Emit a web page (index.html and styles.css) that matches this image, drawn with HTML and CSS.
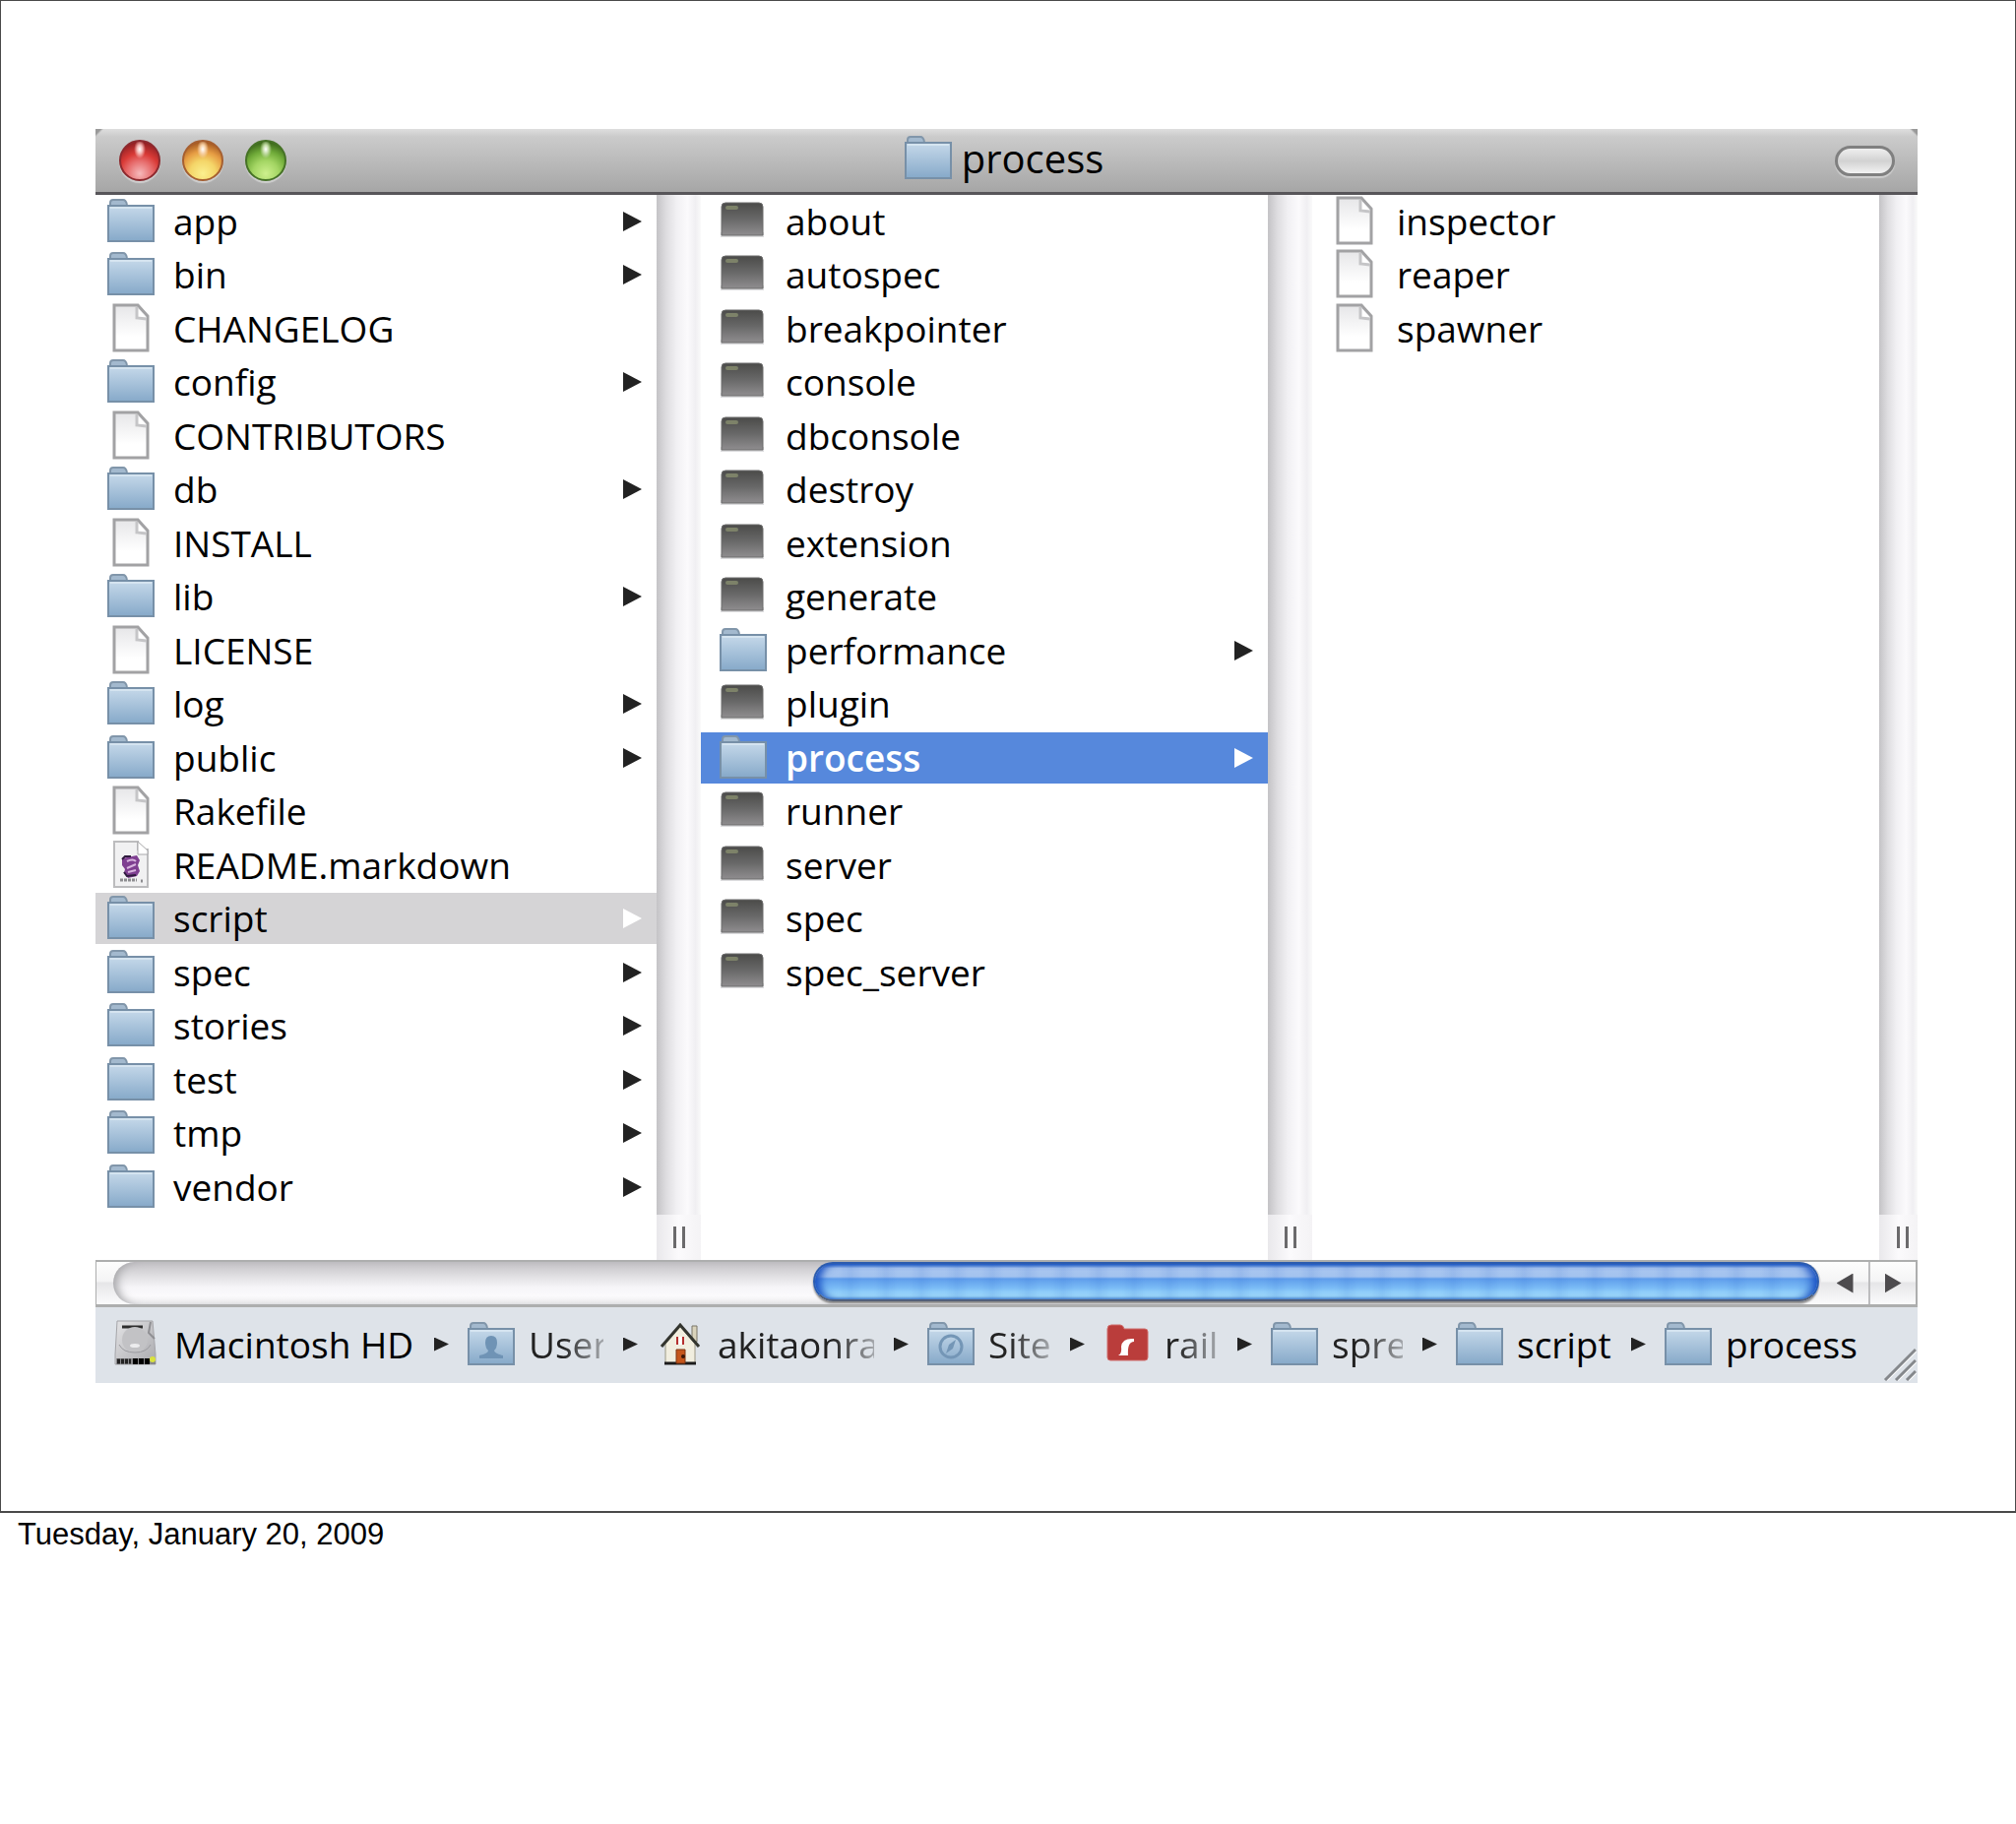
FILE: index.html
```html
<!DOCTYPE html>
<html lang="en">
<head>
    <meta charset="UTF-8">
    <meta name="viewport" content="width=device-width, initial-scale=1.0">
    <title>process</title>
    <link rel="stylesheet" href="styles.css">
</head>
<body>
    <!-- Shared icons -->
    <svg class="defs" aria-hidden="true">
        <defs>
            <linearGradient id="folderFill" x1="0" y1="0" x2="0" y2="1">
                <stop offset="0" stop-color="#c6d9ea"/>
                <stop offset="1" stop-color="#86a9c9"/>
            </linearGradient>
            <linearGradient id="fileFill" x1="0" y1="0" x2="0" y2="1">
                <stop offset="0" stop-color="#e6e6e8"/>
                <stop offset="0.7" stop-color="#ffffff"/>
            </linearGradient>
            <linearGradient id="execFill" x1="0" y1="0" x2="0" y2="1">
                <stop offset="0" stop-color="#4b4b49"/>
                <stop offset="0.5" stop-color="#686868"/>
                <stop offset="1" stop-color="#8f8d8f"/>
            </linearGradient>
            <linearGradient id="diskFill" x1="0" y1="0" x2="1" y2="1">
                <stop offset="0" stop-color="#e4e4e6"/>
                <stop offset="1" stop-color="#a9a9ad"/>
            </linearGradient>
        </defs>
        <symbol id="folder" viewBox="0 0 48 52">
            <path d="M3 12V7q0-3 3-3h10q3 0 4 5l1 3z" fill="#a3b9ce" stroke="#8196aa" stroke-width="2"/>
            <path d="M1 10h46v36H1z" fill="url(#folderFill)" stroke="#7790a8" stroke-width="2"/>
            <path d="M3 12h42" stroke="#d5e4f0" stroke-width="2"/>
        </symbol>
        <symbol id="file" viewBox="0 0 48 52">
            <path d="M7 2h24l10 11v35H7z" fill="url(#fileFill)" stroke="#a2a2a4" stroke-width="3"/>
            <path d="M30 4l10 11q-6 3-11 1z" fill="#fff"/>
            <path d="M30 4v11l10 1" fill="none" stroke="#c5c5c7" stroke-width="3"/>
        </symbol>
        <symbol id="markdown" viewBox="0 0 48 52">
            <path d="M7 2h24v8h10v38H7z" fill="#f1f1f2" stroke="#bcbcbe" stroke-width="2"/>
            <path d="M31 2l10 9v4H31z" fill="#fff" stroke="#a8a8aa"/>
            <path d="M15 19l15-3 3 5-2 5 2 6-3 5-9 2-4-5 1-4-3-4z" fill="#7f3f91"/>
            <path d="M20 22q6-3 9 0M20 29l9-4M21 33l8-2" fill="none" stroke="#d8b5df" stroke-width="2"/>
            <path d="M15 20l3-3 6 0M17 33l3 4 9-1" fill="none" stroke="#2e1a3d" stroke-width="2"/>
            <path d="M13 41h17M34 42h2" stroke="#8d8d90" stroke-width="3" stroke-dasharray="3 1"/>
        </symbol>
        <symbol id="exec" viewBox="0 0 48 52">
            <rect x="1" y="37" width="44" height="5" fill="#dcdcde"/>
            <path d="M2 40V11q0-4 4-4h34q4 0 4 4v29z" fill="url(#execFill)" stroke="#6c6c6c"/>
            <rect x="6" y="10" width="13" height="4" rx="2" fill="#7d8269"/>
        </symbol>
        <symbol id="disk" viewBox="0 0 48 52">
            <path d="M4 2h36l3 34v10H2V36z" fill="url(#diskFill)" stroke="#a5a5a9"/>
            <path d="M9 8h21" stroke="#2d2d2d" stroke-width="3"/>
            <path d="M38 3l-2 11 6 6" fill="none" stroke="#8f8f93" stroke-width="2"/>
            <circle cx="22" cy="21" r="13" fill="#c2c2c5"/>
            <ellipse cx="22" cy="27" rx="5" ry="2" fill="#ececee"/>
            <path d="M6 26q4 8 16 8t16-8" fill="none" stroke="#9b9ba0"/>
            <path d="M3 40h40v6H3z" fill="#88888b"/>
            <path d="M4 43h14" stroke="#222" stroke-width="5" stroke-dasharray="3 1"/>
            <path d="M20 43h17" stroke="#000" stroke-width="6" stroke-dasharray="5 1"/>
            <circle cx="40" cy="41" r="3" fill="#d9e23c"/>
        </symbol>
        <symbol id="home" viewBox="0 0 48 52">
            <path d="M36 7h5v16h-5z" fill="#d9d3bb" stroke="#7b7768"/>
            <path d="M9 25L24 8l15 17v20H9z" fill="#f1eedf" stroke="#9c9884"/>
            <path d="M5 28L24 6l19 22" fill="none" stroke="#33352f" stroke-width="3"/>
            <path d="M8 45h32" stroke="#1b1b1b" stroke-width="3"/>
            <path d="M20 31h9v14h-9z" fill="#c5561b" stroke="#7c3412"/>
            <circle cx="27" cy="38" r="2" fill="#3a1606"/>
            <path d="M21 18v8M27 18v8" stroke="#b5302f" stroke-width="2"/>
            <path d="M24 18v8" stroke="#fff" stroke-width="3"/>
        </symbol>
        <symbol id="rails" viewBox="0 0 48 52">
            <path d="M4 10q0-4 4-4h9q3 0 4 4h21q3 0 3 3v26q0 3-3 3H7q-3 0-3-3z" fill="#ba3d3b" stroke="#cf6c6a"/>
            <path d="M15 37q4-2 3-9 1-9 13-8v3q-7 0-6 14z" fill="#fff"/>
        </symbol>
    </svg>

    <div class="slide">
        <div class="window">
            <header class="titlebar">
                <div class="lights">
                    <button class="light red" aria-label="Close"></button>
                    <button class="light yellow" aria-label="Minimize"></button>
                    <button class="light green" aria-label="Zoom"></button>
                </div>
                <h1 class="title"><svg class="icon"><use href="#folder"/></svg>process</h1>
                <button class="pill" aria-label="Toggle toolbar"></button>
            </header>

            <div class="columns">
                <ul class="column first">
                    <li class="dir"><svg class="icon"><use href="#folder"/></svg>app</li>
                    <li class="dir"><svg class="icon"><use href="#folder"/></svg>bin</li>
                    <li><svg class="icon"><use href="#file"/></svg>CHANGELOG</li>
                    <li class="dir"><svg class="icon"><use href="#folder"/></svg>config</li>
                    <li><svg class="icon"><use href="#file"/></svg>CONTRIBUTORS</li>
                    <li class="dir"><svg class="icon"><use href="#folder"/></svg>db</li>
                    <li><svg class="icon"><use href="#file"/></svg>INSTALL</li>
                    <li class="dir"><svg class="icon"><use href="#folder"/></svg>lib</li>
                    <li><svg class="icon"><use href="#file"/></svg>LICENSE</li>
                    <li class="dir"><svg class="icon"><use href="#folder"/></svg>log</li>
                    <li class="dir"><svg class="icon"><use href="#folder"/></svg>public</li>
                    <li><svg class="icon"><use href="#file"/></svg>Rakefile</li>
                    <li><svg class="icon"><use href="#markdown"/></svg>README.markdown</li>
                    <li class="dir open"><svg class="icon"><use href="#folder"/></svg>script</li>
                    <li class="dir"><svg class="icon"><use href="#folder"/></svg>spec</li>
                    <li class="dir"><svg class="icon"><use href="#folder"/></svg>stories</li>
                    <li class="dir"><svg class="icon"><use href="#folder"/></svg>test</li>
                    <li class="dir"><svg class="icon"><use href="#folder"/></svg>tmp</li>
                    <li class="dir"><svg class="icon"><use href="#folder"/></svg>vendor</li>
                </ul>
                <div class="gutter"><button class="resize" aria-label="Resize column"></button></div>

                <ul class="column">
                    <li><svg class="icon"><use href="#exec"/></svg>about</li>
                    <li><svg class="icon"><use href="#exec"/></svg>autospec</li>
                    <li><svg class="icon"><use href="#exec"/></svg>breakpointer</li>
                    <li><svg class="icon"><use href="#exec"/></svg>console</li>
                    <li><svg class="icon"><use href="#exec"/></svg>dbconsole</li>
                    <li><svg class="icon"><use href="#exec"/></svg>destroy</li>
                    <li><svg class="icon"><use href="#exec"/></svg>extension</li>
                    <li><svg class="icon"><use href="#exec"/></svg>generate</li>
                    <li class="dir"><svg class="icon"><use href="#folder"/></svg>performance</li>
                    <li><svg class="icon"><use href="#exec"/></svg>plugin</li>
                    <li class="dir selected"><svg class="icon"><use href="#folder"/></svg>process</li>
                    <li><svg class="icon"><use href="#exec"/></svg>runner</li>
                    <li><svg class="icon"><use href="#exec"/></svg>server</li>
                    <li><svg class="icon"><use href="#exec"/></svg>spec</li>
                    <li><svg class="icon"><use href="#exec"/></svg>spec_server</li>
                </ul>
                <div class="gutter"><button class="resize" aria-label="Resize column"></button></div>

                <ul class="column">
                    <li><svg class="icon"><use href="#file"/></svg>inspector</li>
                    <li><svg class="icon"><use href="#file"/></svg>reaper</li>
                    <li><svg class="icon"><use href="#file"/></svg>spawner</li>
                </ul>
                <div class="gutter last"><button class="resize" aria-label="Resize column"></button></div>
            </div>

            <div class="scrollbar">
                <div class="track"><div class="thumb"></div></div>
                <button class="scroll left" aria-label="Scroll left"></button>
                <button class="scroll right" aria-label="Scroll right"></button>
            </div>

            <footer class="pathbar">
                <ol class="path">
                    <li><svg class="icon"><use href="#disk"/></svg><span>Macintosh HD</span></li>
                    <li class="cut">
                        <svg class="icon" viewBox="0 0 48 52">
                            <use href="#folder"/>
                            <path d="M24 17q6 0 6 7 0 5-3 8 0 3 9 5v3H12v-3q9-2 9-5-3-3-3-8 0-7 6-7z" fill="#6f93b5"/>
                        </svg>
                        <span>User</span>
                    </li>
                    <li class="cut"><svg class="icon"><use href="#home"/></svg><span>akitaonra</span></li>
                    <li class="cut">
                        <svg class="icon" viewBox="0 0 48 52">
                            <use href="#folder"/>
                            <circle cx="24" cy="28" r="11" fill="none" stroke="#7496b6" stroke-width="3"/>
                            <path d="M29 21l-3 9-7 5 3-9z" fill="#7496b6"/>
                        </svg>
                        <span>Site</span>
                    </li>
                    <li class="cut"><svg class="icon"><use href="#rails"/></svg><span>rail</span></li>
                    <li class="cut"><svg class="icon"><use href="#folder"/></svg><span>spre</span></li>
                    <li><svg class="icon"><use href="#folder"/></svg><span>script</span></li>
                    <li><svg class="icon"><use href="#folder"/></svg><span>process</span></li>
                </ol>
                <svg class="grip" viewBox="0 0 34 34">
                    <path d="M2 33L33 2M13 33L33 13M24 33L33 24" stroke="#fff" stroke-width="2" transform="translate(2 0)"/>
                    <path d="M2 33L33 2M13 33L33 13M24 33L33 24" stroke="#85888c" stroke-width="3"/>
                </svg>
            </footer>
        </div>
    </div>
    <p class="date">Tuesday, January 20, 2009</p>
</body>
</html>
```
FILE: styles.css
```css
* {
    box-sizing: border-box;
}
body {
    margin: 0;
    background-color: #fff;
    color: #000;
    font-family: "Open Sans", "Noto Sans", sans-serif;
    font-size: 37px;
    line-height: 52px;
}
ul, ol {
    list-style: none;
    margin: 0;
    padding: 0;
}
button {
    border: none;
    padding: 0;
    cursor: pointer;
}
.defs {
    position: absolute;
    width: 0;
    height: 0;
}
.icon {
    width: 48px;
    height: 52px;
    flex: none;
}
.slide {
    border: 2px solid #4a4a4a;
    border-width: 1px 1px 2px;
    padding: 130px 99px 130px 96px;
}

/* title bar */
.titlebar {
    display: grid;
    grid-template-columns: 1fr auto 1fr;
    align-items: center;
    height: 67px;
    padding: 0 23px 0 24px;
    border-bottom: 3px solid #58565a;
    background: linear-gradient(135deg, #999 4px, transparent 6px), linear-gradient(225deg, #999 4px, transparent 6px), linear-gradient(#dedede, #cbcbcb 12%, #a6a6a6);
}
.lights {
    display: flex;
    gap: 22px;
}
.light {
    width: 42px;
    height: 42px;
    border-radius: 50%;
    box-shadow: 0 2px 1px #d0d0d0;
}
.red {
    background: radial-gradient(ellipse at 50% 20%, #fff 0, #f4b8b5 10%, transparent 22%), radial-gradient(circle at 50% 85%, #f6b9bb 0, #e66b6b 35%, #d93a36 55%, #6d1219 100%);
    border: 2px solid #8d2a2f;
}
.yellow {
    background: radial-gradient(ellipse at 50% 20%, #fff 0, #f7d2a8 10%, transparent 22%), radial-gradient(circle at 50% 85%, #fbf08f 0, #f4d568 35%, #e69c43 60%, #7e3210 100%);
    border: 2px solid #a65f30;
}
.green {
    background: radial-gradient(ellipse at 50% 20%, #fff 0, #c4dda8 10%, transparent 22%), radial-gradient(circle at 50% 85%, #cdf08d 0, #a3d563 35%, #70ab39 60%, #1c4008 100%);
    border: 2px solid #467226;
}
.title {
    display: flex;
    align-items: center;
    gap: 10px;
    margin: 0;
    padding: 0 6px 4px 0;
    font-size: 40px;
    font-weight: 400;
}
.pill {
    justify-self: end;
    width: 61px;
    height: 31px;
    border: 3px solid #808080;
    border-radius: 16px;
    background: linear-gradient(#efefef, #d2d2d2 50%, #f2f2f2);
    box-shadow: 0 2px 1px #d0d0d0;
}

/* file columns */
.columns {
    display: grid;
    grid-template-columns: 570fr 45px 576fr 45px 576fr 39px;
}
.column {
    padding: 1px 0 46px;
}
.column li {
    display: flex;
    align-items: center;
    gap: 19px;
    height: 52px;
    margin-bottom: 2px;
    padding: 0 15px 0 19px;
}
.column li:nth-child(even) {
    margin-bottom: 3px;
}
.first li {
    padding-left: 12px;
}
.dir::after {
    content: "";
    width: 19px;
    height: 20px;
    margin-left: auto;
    background-color: #222;
    clip-path: polygon(0 0, 100% 50%, 0 100%);
}
.column .open {
    background-color: #d5d4d6;
}
.column .selected {
    background-color: #5688dc;
    color: #fff;
    font-weight: 600;
}
.open::after, .selected::after {
    background-color: #fff;
}
.gutter {
    display: flex;
    align-items: flex-end;
    background: linear-gradient(90deg, #c4c3c6, #dedde0 22%, #f1f0f3 45%, #fbfafc 70%, #f0eff2 88%, #fafafa);
}
.resize {
    display: flex;
    justify-content: center;
    align-items: center;
    gap: 6px;
    width: 100%;
    height: 46px;
    background: linear-gradient(90deg, #e9e8eb, #fbfafc 50%, #f4f3f5);
}
.resize::before, .resize::after {
    content: "";
    width: 3px;
    height: 22px;
    background-color: #6b6a6c;
}
.last .resize {
    padding-left: 8px;
}

/* scroll bar */
.scrollbar {
    display: flex;
    height: 48px;
    border: solid #adaeae;
    border-width: 2px 2px 3px 1px;
    background: linear-gradient(#fdfdfd, #f4f4f5 45%, #e6e6e8 50%, #fbfbfc);
}
.track {
    flex: 1;
    margin-left: 17px;
    padding-right: 2px;
    border-radius: 22px;
    background: linear-gradient(#c3c1c5, #dddcdf 30%, #f6f5f8 60%, #fbfafc 80%, #ededef);
    box-shadow: inset 8px 0 10px -4px #a5a5a8;
}
.thumb {
    width: 59%;
    height: 40px;
    margin-left: auto;
    border: 2px solid #2c5cae;
    border-bottom-color: #52607a;
    border-radius: 20px;
    background:
        repeating-linear-gradient(90deg, rgba(30, 90, 200, 0.1) 0, transparent 12px, transparent 24px, rgba(30, 90, 200, 0.1) 36px),
        linear-gradient(#2760c4, #a9c6ef 12%, #a3c3ef 36%, #5f9deb 42%, #7bbcf6 68%, #a8e2fd 92%, #6ca6da);
    box-shadow: inset 8px 0 8px -3px #1a51c2, inset -8px 0 8px -3px #1a51c2, 0 2px 2px #858585;
}
.scroll {
    width: 48px;
    background: none;
}
.scroll::before {
    content: "";
    display: block;
    width: 17px;
    height: 20px;
    margin: 0 auto;
    background-color: #4d4b4e;
    clip-path: polygon(0 0, 100% 50%, 0 100%);
}
.scroll.left::before {
    clip-path: polygon(100% 0, 0 50%, 100% 100%);
}
.scroll.right {
    border-left: 2px solid #bdbdbf;
}

/* path bar */
.pathbar {
    display: flex;
    justify-content: space-between;
    align-items: flex-end;
    height: 77px;
    padding: 0 1px 2px 18px;
    background-color: #dee3e9;
}
.path {
    display: flex;
    height: 75px;
    align-items: center;
}
.path li {
    display: flex;
    align-items: center;
    gap: 14px;
}
.path span {
    white-space: nowrap;
}
.path li:not(:last-child)::after {
    content: "";
    width: 15px;
    height: 14px;
    margin: 0 19px 0 6px;
    background-color: #222;
    clip-path: polygon(0 0, 100% 50%, 0 100%);
}
.path li:nth-child(1) span { width: 244px; }
.path li:nth-child(2) span { width: 76px; }
.path li:nth-child(3) span { width: 159px; }
.path li:nth-child(4) span { width: 63px; }
.path li:nth-child(5) span { width: 54px; }
.path li:nth-child(6) span { width: 72px; }
.path li:nth-child(7) span { width: 96px; }
.cut span {
    color: #222;
    mask-image: linear-gradient(90deg, #000 calc(100% - 42px), rgba(0, 0, 0, 0.3));
}
.grip {
    width: 34px;
    height: 34px;
}

.date {
    margin: 0;
    padding: 2px 18px;
    font-family: "Liberation Sans", Arial, sans-serif;
    font-size: 31px;
    line-height: 40px;
}
```
